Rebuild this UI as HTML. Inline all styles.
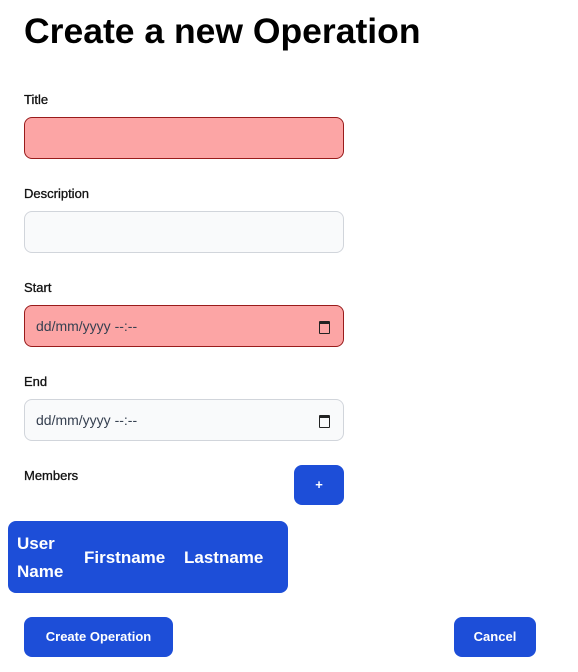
<!DOCTYPE html>
<html><head><style>
body{margin:0;width:578px;height:672px;background:#fff;font-family:"Liberation Sans",sans-serif;color:#111;position:relative;overflow:hidden}
.a{position:absolute}
h1{position:absolute;left:24px;top:11px;margin:0;font-size:35.5px;font-weight:bold;color:#000}
.l{position:absolute;left:24px;font-size:13px;color:#111;-webkit-text-stroke:0.3px #111}
.i{position:absolute;left:24px;width:320px;height:42px;border-radius:8px;box-sizing:border-box}
.r{background:#fca5a5;border:1px solid #991b1b}
.g{background:#f9fafb;border:1px solid #d1d5db}
.d{font-size:14px;color:#374151;line-height:40px;padding-left:11px}
.cal{position:absolute;right:13px;top:15px;width:9px;height:9px;border:1.5px solid #222;border-top-width:3px;border-radius:1px}
.b{position:absolute;background:#1d4ed8;color:#fff;border-radius:8px;font-size:13px;font-weight:bold;text-align:center}
</style></head><body>
<h1>Create a new Operation</h1>
<div class="l" style="top:92px">Title</div>
<div class="i r" style="top:117px"></div>
<div class="l" style="top:186px">Description</div>
<div class="i g" style="top:211px"></div>
<div class="l" style="top:280px">Start</div>
<div class="i r d" style="top:305px">dd/mm/yyyy --:--<span class="cal"></span></div>
<div class="l" style="top:374px">End</div>
<div class="i g d" style="top:399px">dd/mm/yyyy --:--<span class="cal"></span></div>
<div class="l" style="top:468px">Members</div>
<div class="b" style="left:294px;top:465px;width:50px;height:40px;line-height:40px">+</div>
<div class="b" style="left:8px;top:521px;width:280px;height:72px;font-size:17px;text-align:left">
<div class="a" style="left:9px;top:9px;line-height:28px">User<br>Name</div>
<div class="a" style="left:76px;top:26px;line-height:22px">Firstname</div>
<div class="a" style="left:176px;top:26px;line-height:22px">Lastname</div>
</div>
<div class="b" style="left:24px;top:617px;width:149px;height:40px;line-height:40px">Create Operation</div>
<div class="b" style="left:454px;top:617px;width:82px;height:40px;line-height:40px">Cancel</div>
</body></html>
